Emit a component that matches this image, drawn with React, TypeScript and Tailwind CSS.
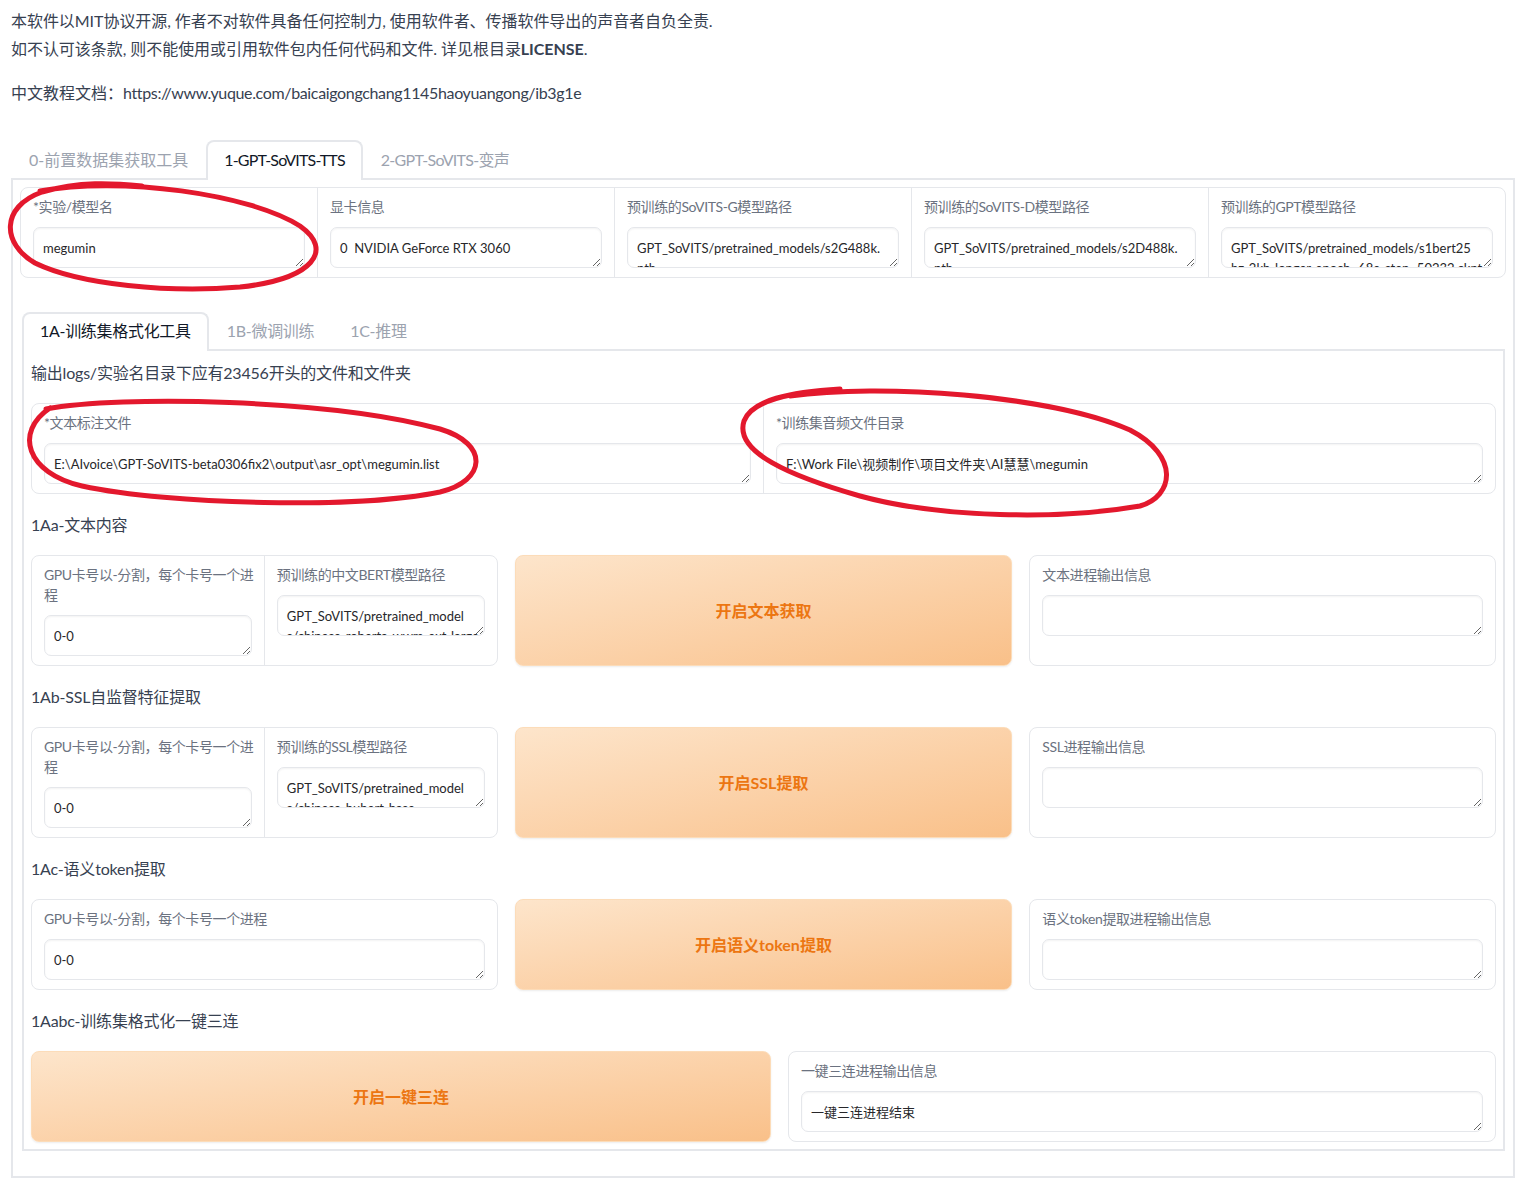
import React from "react";

const FONT = "font-['Lato','Noto_Sans_CJK_SC',sans-serif]";

interface FieldProps {
  label: React.ReactNode;
  value?: string;
}

const Field: React.FC<FieldProps> = ({ label, value = "" }) => (
  <div className="flex-1 min-w-0 px-[12px] pt-[9px] pb-[9px]">
    <div className="text-[14px] leading-[20px] tracking-[-0.4px] text-[#6b7280] mb-[10px]">{label}</div>
    <textarea
      readOnly
      value={value}
      wrap="off"
      rows={1}
      className="block w-full h-[41px] rounded-[7px] border border-[#e5e7eb] bg-white px-[9px] py-[10px] text-[13px] leading-[20px] text-[#27272a] overflow-hidden outline-none shadow-[inset_0_1px_2px_rgba(0,0,0,0.05)]"
    />
  </div>
);

// a gradio "form": several fields in one bordered box, split by thin lines
const Form: React.FC<{ children: React.ReactNode }> = ({ children }) => (
  <div className="flex rounded-[8px] border border-[#e5e7eb] bg-white divide-x divide-[#e5e7eb]">
    {children}
  </div>
);

const OrangeButton: React.FC<{ text: string }> = ({ text }) => (
  <button className="flex items-center justify-center rounded-[8px] border border-[#fcdcb9] bg-linear-to-br from-[#fde5cb] to-[#f9c089] text-[16px] font-bold text-[#ec7612] shadow-[0_1px_2px_rgba(0,0,0,0.08)]">
    {text}
  </button>
);

const Heading: React.FC<{ text: string }> = ({ text }) => (
  <div className="text-[16px] leading-[29px] tracking-[-0.2px] text-[#374151]">{text}</div>
);

const gpuLabel = (
  <>
    <span className="block whitespace-nowrap">GPU卡号以-分割，每个卡号一个进</span>
    <span className="block">程</span>
  </>
);

const Annotations = () => (
  <svg
    className="absolute inset-0 pointer-events-none"
    width="1531"
    height="1194"
    viewBox="0 0 1531 1194"
    fill="none"
    stroke="#e3182d"
    strokeWidth="5"
    strokeLinecap="round"
  >
    <path d="M40 191 C120 176 250 194 300 226 C334 250 314 279 240 287 C170 293 80 285 35 263 C2 244 0 207 42 192 C80 181 112 183 142 186" />
    <path d="M46 409 C120 395 330 399 440 429 C490 444 486 481 440 492 C360 509 170 505 82 486 C26 473 14 432 50 408" />
    <path d="M790 396 C880 383 1050 395 1130 430 C1180 456 1174 496 1140 506 C1060 520 940 518 860 496 C790 476 734 452 744 421 C752 400 790 392 840 389" />
  </svg>
);

export default function App() {
  return (
    <div className={`relative w-[1531px] min-h-[1194px] bg-white pl-[11px] pr-[16px] pt-[7px] ${FONT}`}>
      {/* intro text */}
      <div className="text-[16px] leading-[28px] text-[#374151]">
        <p className="tracking-[-0.05px]">
          本软件以MIT协议开源, 作者不对软件具备任何控制力, 使用软件者、传播软件导出的声音者自负全责.
          <br />
          如不认可该条款, 则不能使用或引用软件包内任何代码和文件. 详见根目录<b>LICENSE</b>.
        </p>
        <p className="mt-[16px]">
          中文教程文档：<span className="tracking-[-0.35px]">https://www.yuque.com/baicaigongchang1145haoyuangong/ib3g1e</span>
        </p>
      </div>

      {/* outer tabs */}
      <div className="mt-[33px]">
        <div className="flex text-[16px] leading-[24px]">
          <div className="-mb-[2px] border-2 border-b-0 border-transparent px-[16px] pt-[6px] pb-[8px] text-[#9ca3af]">
            0-前置数据集获取工具
          </div>
          <div className="relative z-10 -mb-[2px] rounded-t-[8px] border-2 border-b-0 border-[#e5e7eb] bg-white px-[16px] pt-[6px] pb-[8px] tracking-[-0.8px] text-[#111827]">
            1-GPT-SoVITS-TTS
          </div>
          <div className="-mb-[2px] border-2 border-b-0 border-transparent px-[16px] pt-[6px] pb-[8px] tracking-[-0.7px] text-[#9ca3af]">
            2-GPT-SoVITS-变声
          </div>
        </div>

        <div className="border-2 border-[#e5e7eb] px-[7px] pt-[7px] pb-[25px]">
          <Form>
            <Field label="*实验/模型名" value="megumin" />
            <Field label="显卡信息" value={"0  NVIDIA GeForce RTX 3060"} />
            <Field label="预训练的SoVITS-G模型路径" value={"GPT_SoVITS/pretrained_models/s2G488k.\npth"} />
            <Field label="预训练的SoVITS-D模型路径" value={"GPT_SoVITS/pretrained_models/s2D488k.\npth"} />
            <Field
              label="预训练的GPT模型路径"
              value={"GPT_SoVITS/pretrained_models/s1bert25\nhz-2kh-longer-epoch=68e-step=50232.ckpt"}
            />
          </Form>

          {/* inner tabs */}
          <div className="mt-[34px] ml-[2px] mr-[1px]">
            <div className="flex text-[16px] leading-[24px] tracking-[-0.3px]">
              <div className="relative z-10 -mb-[2px] rounded-t-[8px] border-2 border-b-0 border-[#e5e7eb] bg-white px-[16px] pt-[5px] pb-[8px] text-[#111827]">
                1A-训练集格式化工具
              </div>
              <div className="-mb-[2px] border-2 border-b-0 border-transparent px-[16px] pt-[5px] pb-[8px] text-[#9ca3af]">
                1B-微调训练
              </div>
              <div className="-mb-[2px] border-2 border-b-0 border-transparent px-[16px] pt-[5px] pb-[8px] text-[#9ca3af]">
                1C-推理
              </div>
            </div>

            <div className="flex flex-col gap-[16px] border-2 border-[#e5e7eb] px-[7px] pt-[7px] pb-[7px]">
              <Heading text="输出logs/实验名目录下应有23456开头的文件和文件夹" />
              <Form>
                <Field label="*文本标注文件" value={"E:\\AIvoice\\GPT-SoVITS-beta0306fix2\\output\\asr_opt\\megumin.list"} />
                <Field label="*训练集音频文件目录" value={"F:\\Work File\\视频制作\\项目文件夹\\AI慧慧\\megumin"} />
              </Form>

              <Heading text="1Aa-文本内容" />
              <div className="grid grid-cols-[466fr_497fr_466fr] gap-[17px]">
                <Form>
                  <Field label={gpuLabel} value="0-0" />
                  <Field label="预训练的中文BERT模型路径" value={"GPT_SoVITS/pretrained_model\ns/chinese-roberta-wwm-ext-large"} />
                </Form>
                <OrangeButton text="开启文本获取" />
                <Form>
                  <Field label="文本进程输出信息" />
                </Form>
              </div>

              <Heading text="1Ab-SSL自监督特征提取" />
              <div className="grid grid-cols-[466fr_497fr_466fr] gap-[17px]">
                <Form>
                  <Field label={gpuLabel} value="0-0" />
                  <Field label="预训练的SSL模型路径" value={"GPT_SoVITS/pretrained_model\ns/chinese-hubert-base"} />
                </Form>
                <OrangeButton text="开启SSL提取" />
                <Form>
                  <Field label="SSL进程输出信息" />
                </Form>
              </div>

              <Heading text="1Ac-语义token提取" />
              <div className="grid grid-cols-[466fr_497fr_466fr] gap-[17px]">
                <Form>
                  <Field label="GPU卡号以-分割，每个卡号一个进程" value="0-0" />
                </Form>
                <OrangeButton text="开启语义token提取" />
                <Form>
                  <Field label="语义token提取进程输出信息" />
                </Form>
              </div>

              <Heading text="1Aabc-训练集格式化一键三连" />
              <div className="grid grid-cols-[739fr_707fr] gap-[17px]">
                <OrangeButton text="开启一键三连" />
                <Form>
                  <Field label="一键三连进程输出信息" value="一键三连进程结束" />
                </Form>
              </div>
            </div>
          </div>
        </div>
      </div>

      <Annotations />
    </div>
  );
}
